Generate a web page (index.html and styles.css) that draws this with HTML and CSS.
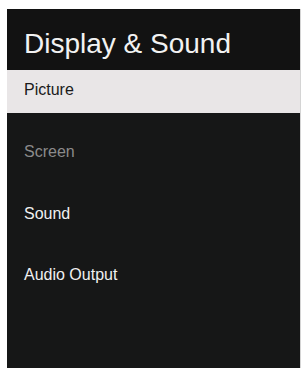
FILE: index.html
```html
<!DOCTYPE html>
<html lang="en">
<head>
    <meta charset="UTF-8">
    <meta name="viewport" content="width=device-width, initial-scale=1.0">
    <title>Display &amp; Sound</title>
    <link rel="stylesheet" href="styles.css">
</head>
<body>
    <div class="panel">
        <div class="panel-title">Display &amp; Sound</div>
        <ul class="menu">
            <li class="menu-item selected">Picture</li>
            <li class="menu-item disabled">Screen</li>
            <li class="menu-item">Sound</li>
            <li class="menu-item">Audio Output</li>
        </ul>
    </div>
</body>
</html>
```

FILE: styles.css
```css
body {
    margin: 0;
    background-color: #ffffff;
    font-family: 'Liberation Sans', Arial, sans-serif;
    overflow: hidden;
}
.panel {
    margin: 9px 0 0 7px;
    height: 370px;
    background-color: #161717;
    border-right: 1px solid #d4d4d4;
}
.panel-title {
    box-sizing: border-box;
    height: 61px;
    padding: 19px 17px 0;
    background-color: #121212;
    color: #f2f2f2;
    font-size: 28px;
}
.menu {
    list-style: none;
    margin: 0;
    padding: 0;
}
.menu-item {
    box-sizing: border-box;
    height: 43px;
    padding: 11px 17px 0;
    margin-bottom: 19px;
    color: #f0f0f0;
    font-size: 16px;
}
.menu-item.selected {
    background-color: #e9e6e7;
    color: #1a1a1a;
}
.menu-item.disabled {
    color: #8b8b8b;
}
.menu-item:nth-child(3) {
    margin-bottom: 18px;
}
```
